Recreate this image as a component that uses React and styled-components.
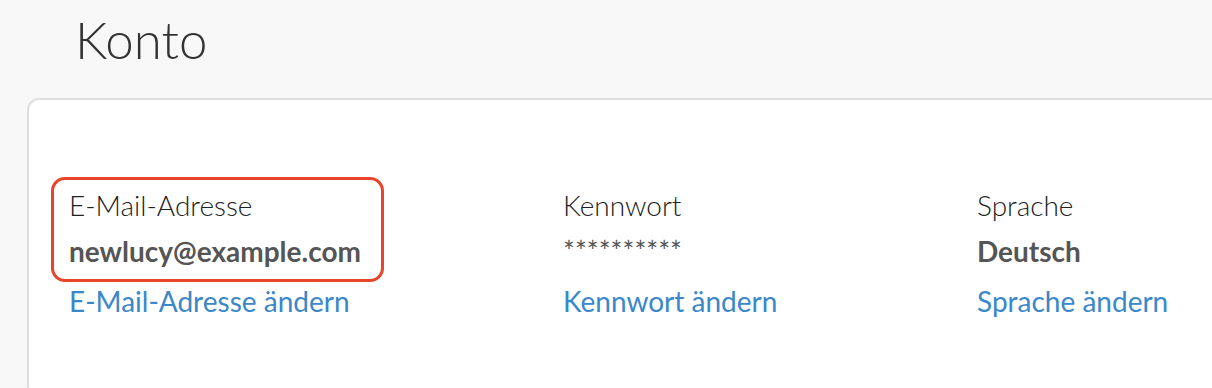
import React from 'react';
import styled, { createGlobalStyle } from 'styled-components';

const GlobalStyle = createGlobalStyle`
  html, body {
    margin: 0;
    padding: 0;
    background: #f8f8f8;
    overflow: hidden;
  }
  body {
    font-family: Lato, "Open Sans", sans-serif;
  }
`;

const Page = styled.div`
  padding-left: 27px;
`;

const Title = styled.h1`
  margin: 0;
  padding: 10px 0 0 48px;
  font-size: 51px;
  line-height: 60px;
  font-weight: 300;
  color: #333;
`;

const Card = styled.section`
  margin-top: 28px;
  width: calc(100% + 40px);
  height: 300px;
  box-sizing: border-box;
  background: #fff;
  border: 2px solid #dedede;
  border-radius: 12px;
  padding: 82px 0 0 40px;
`;

const Fields = styled.div`
  display: grid;
  grid-template-columns: 494px 414px auto;
`;

const Field = styled.div`
  display: flex;
  flex-direction: column;
  align-items: flex-start;
`;

// red annotation frame drawn over the e-mail field
const Highlight = styled.div`
  position: relative;
  display: flex;
  flex-direction: column;

  &::after {
    content: '';
    position: absolute;
    top: -5px;
    left: -18px;
    right: -23px;
    bottom: -7px;
    border: 3px solid #e8432b;
    border-radius: 14px;
    pointer-events: none;
  }
`;

const Label = styled.div`
  font-size: 28px;
  line-height: 46px;
  font-weight: 300;
  color: #222;
`;

const Value = styled.div`
  font-size: 28px;
  line-height: 47px;
  font-weight: ${p => (p.$masked ? 400 : 700)};
  color: #555;
`;

const ChangeLink = styled.a`
  font-size: 28px;
  line-height: 52px;
  color: #3a87c9;
  text-decoration: none;
  cursor: pointer;
`;

const fields = [
  { label: 'E-Mail-Adresse', value: 'newlucy@example.com', link: 'E-Mail-Adresse ändern', marked: true },
  { label: 'Kennwort', value: '**********', link: 'Kennwort ändern', masked: true },
  { label: 'Sprache', value: 'Deutsch', link: 'Sprache ändern' },
];

const App = () => {
  return (
    <Page>
      <GlobalStyle />
      <Title>Konto</Title>
      <Card>
        <Fields>
          {fields.map(f => {
            const body = (
              <>
                <Label>{f.label}</Label>
                <Value $masked={f.masked}>{f.value}</Value>
              </>
            );
            return (
              <Field key={f.label}>
                {f.marked ? <Highlight>{body}</Highlight> : body}
                <ChangeLink>{f.link}</ChangeLink>
              </Field>
            );
          })}
        </Fields>
      </Card>
    </Page>
  );
};

export default App;
